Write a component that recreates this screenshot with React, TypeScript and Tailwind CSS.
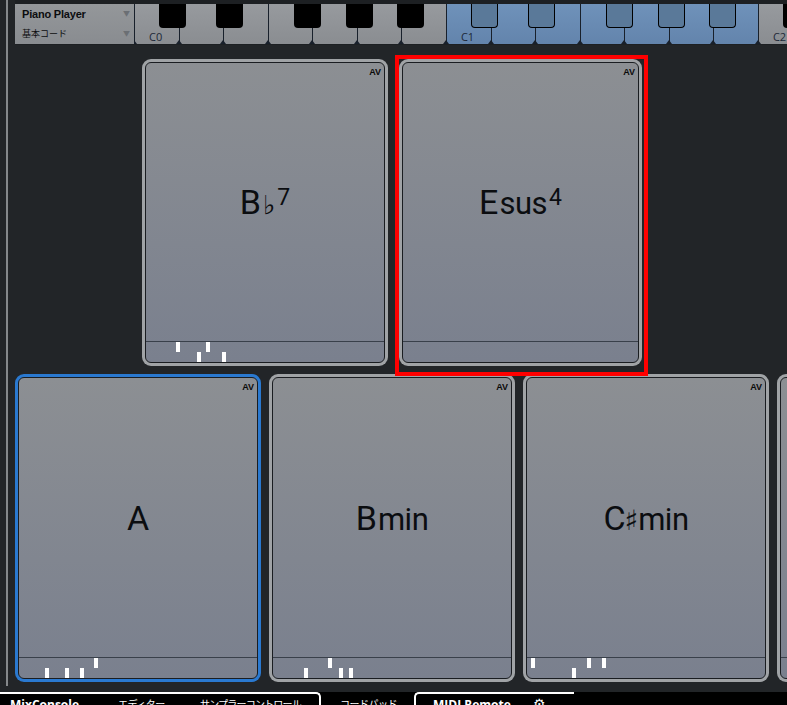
import React from "react";

type Marker = [number, "u" | "l"];

type Chord = {
  root: string;
  acc?: string;
  suffix?: string;
  sup?: string;
  markers: Marker[];
};

const whiteKeys = Array.from({ length: 16 }, (_, i) => i);
const blackOffsets = [25, 82, 160, 212, 263];

function Keyboard() {
  return (
    <div className="relative flex h-[40px] flex-1 overflow-hidden">
      {whiteKeys.map((i) => {
        const blue = i >= 7 && i <= 13;
        const label = i === 0 ? "C0" : i === 7 ? "C1" : i === 14 ? "C2" : "";
        return (
          <div
            key={i}
            className={`relative h-full w-[44.57px] shrink-0 border-l border-[#18202b] ${
              blue
                ? "bg-gradient-to-b from-[#6f92ba] to-[#6384ac]"
                : "bg-gradient-to-b from-[#979a9e] to-[#8a8d91]"
            }`}
          >
            <div className="absolute bottom-0 left-[-4px] h-0 w-0 border-x-[3px] border-b-[4px] border-x-transparent border-b-[#18202b]" />
            {label && (
              <span className="absolute bottom-[2px] left-[14px] text-[11px] leading-none text-[#1c2837]">
                {label}
              </span>
            )}
          </div>
        );
      })}
      {[0, 1, 2].map((o) =>
        blackOffsets.map((b) => (
          <div
            key={`${o}-${b}`}
            className={`absolute top-0 h-[24px] w-[27px] rounded-b-[4px] ${
              o === 1 ? "border border-t-0 border-black bg-[#5a7999]" : "bg-black"
            }`}
            style={{ left: b + o * 312 }}
          />
        ))
      )}
    </div>
  );
}

function ChordName({ c }: { c: Chord }) {
  return (
    <div className="flex items-baseline font-['Roboto','Liberation_Sans',sans-serif] text-[34px] leading-none text-[#0b0d10]">
      <span>{c.root}</span>
      {c.acc === "♭" && (
        <span className="ml-[2px] font-['DejaVu_Sans',sans-serif] text-[26px]">{c.acc}</span>
      )}
      {c.acc === "♯" && (
        <span className="mx-[-1px] font-['DejaVu_Sans',sans-serif] text-[28px]">{c.acc}</span>
      )}
      {c.suffix && <span className="ml-[1px] text-[31px] tracking-[-0.5px]">{c.suffix}</span>}
      {c.sup && <span className="relative top-[-9px] ml-[2px] text-[23px]">{c.sup}</span>}
    </div>
  );
}

function Pad({
  c,
  width,
  height,
  rim,
}: {
  c: Chord | null;
  width: string;
  height: string;
  rim: string;
}) {
  return (
    <div className={`${width} ${height} shrink-0 rounded-[9px] p-[3px] ${rim}`}>
      <div className="flex h-full flex-col overflow-hidden rounded-[6px] border border-[#1a1d21] bg-gradient-to-b from-[#8c8f93] to-[#7a808e]">
        <div className="relative flex flex-1 items-center justify-center">
          {c && (
            <span className="absolute right-[3px] top-[5px] font-['Liberation_Sans',sans-serif] text-[9px] font-bold leading-none text-[#0b0b0b]">
              AV
            </span>
          )}
          {c && <ChordName c={c} />}
        </div>
        <div className="relative h-[21px] shrink-0 border-t border-[#39404a]">
          {c?.markers.map(([x, row], i) => (
            <div
              key={i}
              className={`absolute h-[10px] w-[4px] bg-white ${row === "u" ? "top-0" : "top-[10px]"}`}
              style={{ left: x - 4 }}
            />
          ))}
        </div>
      </div>
    </div>
  );
}

const row1: Chord[] = [
  { root: "B", acc: "♭", sup: "7", markers: [[34, "u"], [55, "l"], [64, "u"], [80, "l"]] },
  { root: "E", suffix: "sus", sup: "4", markers: [] },
];

const row2: Chord[] = [
  { root: "A", markers: [[30, "l"], [50, "l"], [65, "l"], [79, "u"]] },
  { root: "B", suffix: "min", markers: [[35, "l"], [59, "u"], [70, "l"], [80, "l"]] },
  { root: "C", acc: "♯", suffix: "min", markers: [[8, "u"], [49, "l"], [64, "u"], [79, "u"]] },
];

export default function App() {
  return (
    <div className="flex h-[705px] w-[787px] flex-col overflow-hidden bg-[#222528] font-['Open_Sans','Noto_Sans_CJK_JP',sans-serif]">
      <div className="flex min-h-0 flex-1">
        <div className="flex w-[15px] shrink-0 justify-center">
          <div className="ml-[-1px] h-[686px] w-[2px] bg-[#85888b]" />
        </div>
        <div className="flex min-w-0 flex-1 flex-col">
          <div className="flex h-[45px] shrink-0 flex-col bg-[#1d2023] pt-[4px]">
            <div className="flex h-[40px]">
              <div className="flex w-[119px] shrink-0 flex-col bg-gradient-to-b from-[#94979a] to-[#898c90] pl-[7px] pr-[4px]">
                <div className="flex h-[20px] items-center justify-between">
                  <span className="font-['Liberation_Sans',sans-serif] text-[11px] font-bold tracking-[-0.2px] text-[#0c0d0f]">
                    Piano Player
                  </span>
                  <span className="text-[7px] text-[#6b6f74]">▼</span>
                </div>
                <div className="flex h-[20px] items-center justify-between">
                  <span className="font-['Noto_Sans_CJK_JP',sans-serif] text-[9px] text-[#0c0d0f]">
                    基本コード
                  </span>
                  <span className="text-[7px] text-[#6b6f74]">▼</span>
                </div>
              </div>
              <Keyboard />
            </div>
          </div>

          <div className="relative mt-[14px] flex items-start gap-[11px] pl-[127px]">
            <Pad c={row1[0]} width="w-[246px]" height="h-[307px]" rim="bg-[#a0a3a6]" />
            <div className="relative">
              <Pad c={row1[1]} width="w-[243px]" height="h-[307px]" rim="bg-[#a0a3a6]" />
              <div className="pointer-events-none absolute bottom-[-10px] left-[-4px] right-[-6px] top-[-4px] border-4 border-[#ff0000]" />
            </div>
          </div>

          <div className="mt-[8px] flex gap-[8px]">
            <Pad c={row2[0]} width="w-[246px]" height="h-[308px]" rim="bg-[#2a79d0]" />
            <Pad c={row2[1]} width="w-[246px]" height="h-[308px]" rim="bg-[#a0a3a6]" />
            <Pad c={row2[2]} width="w-[246px]" height="h-[308px]" rim="bg-[#a0a3a6]" />
            <Pad c={null} width="w-[246px]" height="h-[308px]" rim="bg-[#a0a3a6]" />
          </div>
        </div>
      </div>

      <div className="flex h-[13px] shrink-0 items-start bg-black text-[12px] leading-none text-white">
        <div className="flex h-full w-[321px] items-start rounded-tr-[5px] border-r-2 border-t-2 border-white pl-[10px] pt-[5px]">
          <span className="w-[108px] font-bold">MixConsole</span>
          <span className="w-[82px] font-['Noto_Sans_CJK_JP',sans-serif] text-[10px] tracking-[-0.5px]">
            エディター
          </span>
          <span className="font-['Noto_Sans_CJK_JP',sans-serif] text-[10px] tracking-[-0.8px]">
            サンプラーコントロール
          </span>
        </div>
        <div className="w-[93px] pl-[19px] pt-[7px] font-['Noto_Sans_CJK_JP',sans-serif] text-[10px] tracking-[-0.5px]">
          コードパッド
        </div>
        <div className="flex h-full w-[160px] items-start gap-[22px] rounded-tl-[5px] border-l-2 border-t-2 border-white pl-[17px] pt-[5px]">
          <span className="font-bold">MIDI Remote</span>
          <span className="mt-[-2px] text-[14px]">⚙</span>
        </div>
      </div>
    </div>
  );
}
